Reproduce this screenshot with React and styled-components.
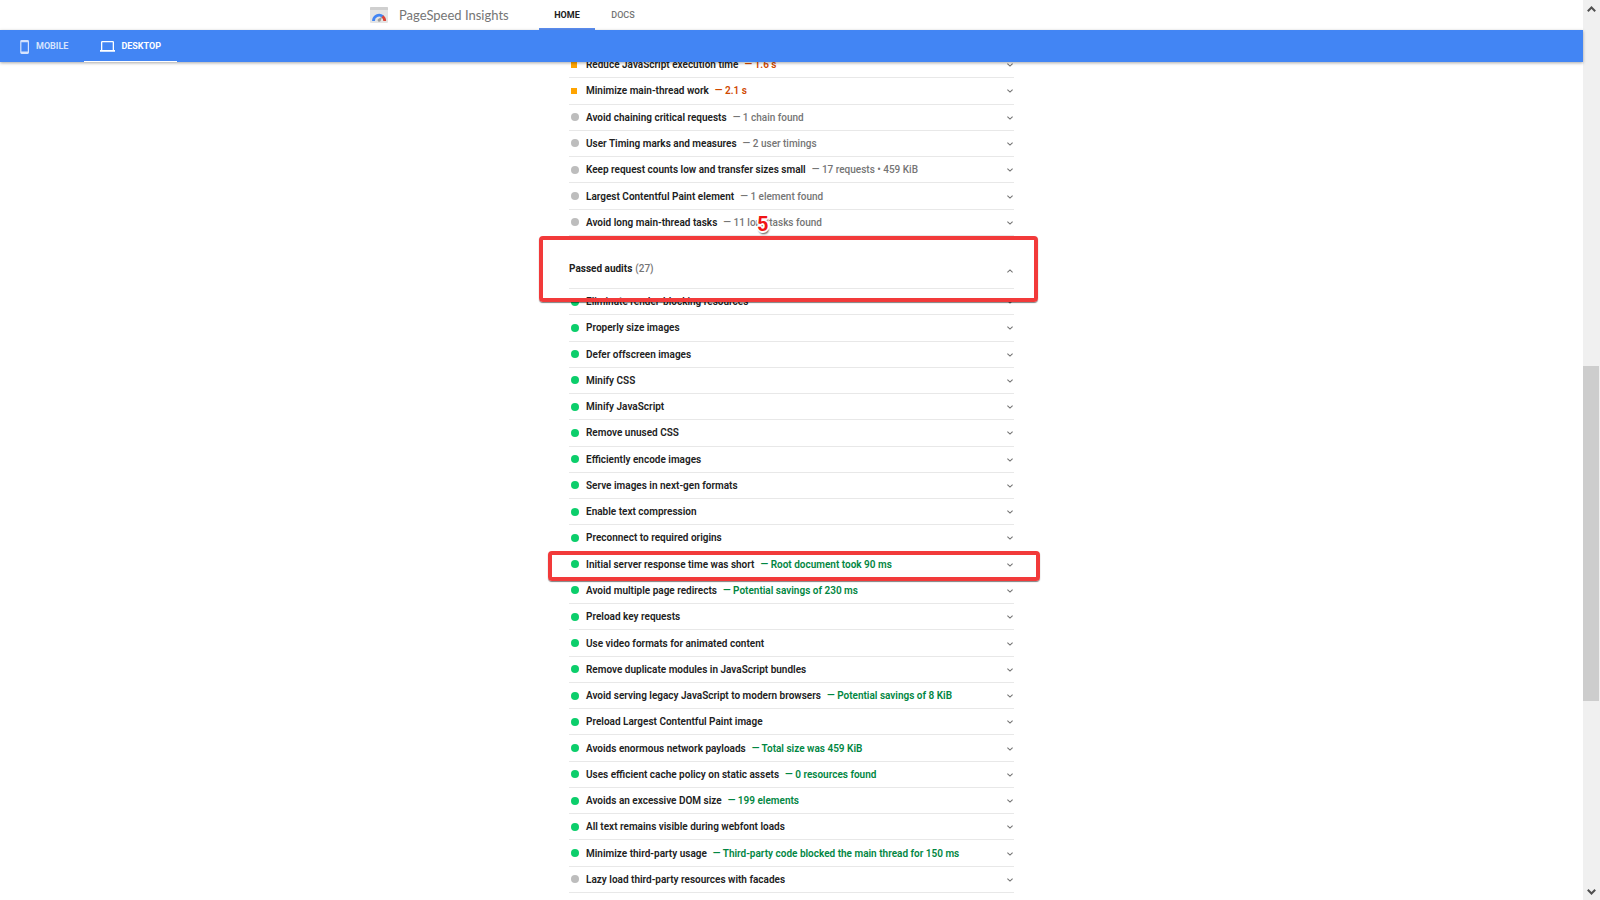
import React from "react";
import styled, { createGlobalStyle, css } from "styled-components";

const GlobalStyle = createGlobalStyle`
  * { box-sizing: border-box; }
  html, body, #root { height: 100%; }
  body {
    margin: 0;
    background: #fff;
    color: #212121;
    font-family: Roboto, "Liberation Sans", sans-serif;
    font-size: 10px;
    overflow: hidden;
  }
  button { font: inherit; color: inherit; background: none; border: 0; padding: 0; margin: 0; cursor: pointer; }
  h1, h2, ul { margin: 0; padding: 0; font: inherit; list-style: none; }
`;

const Shell = styled.div`
  display: grid;
  grid-template-columns: 1fr 17px;
  height: 100%;
`;

const Page = styled.div`
  display: flex;
  flex-direction: column;
  min-width: 0;
  min-height: 0;
`;

const TopBar = styled.header`
  display: flex;
  flex: none;
  height: 30px;
  background: #fff;
`;

const TopBarInner = styled.div`
  display: flex;
  align-items: stretch;
  width: 100%;
  max-width: 843px;
  margin: 0 auto;
`;

const Brand = styled.h1`
  display: flex;
  align-items: center;
  gap: 11px;
  width: 169px;
  color: #757575;
  font-family: Lato, Roboto, sans-serif;
  font-size: 13px;
  line-height: 14px;
  white-space: nowrap;
`;

const SiteNav = styled.nav`
  display: flex;
`;

const SiteLink = styled.a`
  display: flex;
  align-items: center;
  justify-content: center;
  width: 56px;
  padding-top: 1px;
  border-bottom: 2px solid ${(p) => (p.$active ? "#5a8df0" : "transparent")};
  color: ${(p) => (p.$active ? "#212121" : "#757575")};
  font-size: 9px;
  font-weight: ${(p) => (p.$active ? 700 : 500)};
  text-decoration: none;
`;

const DeviceBar = styled.div`
  position: relative;
  z-index: 2;
  display: flex;
  flex: none;
  height: 32px;
  padding-left: 4px;
  background: #4285f4;
  box-shadow: 0 1px 3px rgba(0, 0, 0, 0.35);
`;

const DeviceTab = styled.button`
  display: flex;
  align-items: center;
  gap: 6px;
  padding: 0 16px;
  border-bottom: 1px solid ${(p) => (p.$active ? "#fff" : "transparent")};
  color: ${(p) => (p.$active ? "#fff" : "#d5e3fd")};
  font-size: 9px;
  font-weight: 700;
  line-height: 10px;
  svg { margin-top: 2px; }
`;

const Viewport = styled.main`
  flex: 1;
  min-height: 0;
  overflow: hidden;
`;

const Report = styled.div`
  width: 100%;
  max-width: 445px;
  margin: -10px auto 0;
`;

const AuditList = styled.ul`
  display: grid;
  grid-auto-rows: 1fr;
  min-height: ${(p) => p.$minHeight}px;
`;

const AuditItem = styled.li`
  position: relative;
  display: flex;
  border-bottom: 1px solid #e8e8e8;
`;

const AuditButton = styled.button`
  display: flex;
  align-items: center;
  width: 100%;
  padding: 0 1px 0 2px;
  text-align: left;
  white-space: nowrap;
`;

const tones = {
  average: { mark: "#ffa400", text: "#d04900" },
  info: { mark: "#bdbdbd", text: "#757575" },
  pass: { mark: "#0cce6b", text: "#018642" },
};

const Marker = styled.span`
  flex: none;
  width: 8px;
  height: 8px;
  margin-right: 7px;
  border-radius: 50%;
  background: ${(p) => tones[p.$tone].mark};
  ${(p) =>
    p.$tone === "average" &&
    css`
      width: 6px;
      height: 6px;
      margin-right: 9px;
      border-radius: 0;
    `}
`;

const AuditTitle = styled.span`
  font-weight: 600;
`;

const AuditValue = styled.span`
  margin-left: 6px;
  color: ${(p) => tones[p.$tone].text};
  font-weight: ${(p) => (p.$tone === "info" ? 500 : 600)};
`;

const ChevronSlot = styled.span`
  display: flex;
  margin-left: auto;
  padding-top: 1px;
`;

const ClumpHeader = styled.h2`
  position: relative;
  display: flex;
  height: 53px;
  border-bottom: 1px solid #e8e8e8;
`;

const ClumpButton = styled.button`
  display: flex;
  align-items: center;
  gap: 3px;
  width: 100%;
  padding: 13px 1px 0 0;
  font-weight: 700;
  text-align: left;
  ${ChevronSlot} { padding-top: 5px; }
`;

const ClumpCount = styled.span`
  color: #757575;
  font-weight: 500;
`;

const Highlight = styled.span`
  position: absolute;
  z-index: 1;
  inset: ${(p) => p.$inset};
  border: 4px solid #f23a3a;
  border-radius: 4px;
  box-shadow: 0 1px 1px rgba(0, 0, 0, 0.5);
  pointer-events: none;
`;

const StepNumber = styled.span`
  position: absolute;
  left: 188px;
  top: 2px;
  color: #f01414;
  font-size: 20px;
  font-weight: 700;
  line-height: 24px;
  text-shadow: -2px 0 #fff, 2px 0 #fff, 0 -2px #fff, 0 2px #fff, 1px 1px #fff,
    -1px -1px #fff, 1px 3px 2px rgba(0, 0, 0, 0.7);
  pointer-events: none;
`;

const ScrollRail = styled.aside`
  display: flex;
  flex-direction: column;
  background: #f0f0f0;
`;

const ScrollButton = styled.button`
  display: flex;
  flex: none;
  align-items: center;
  justify-content: center;
  height: 17px;
`;

const ScrollTrack = styled.div`
  display: grid;
  flex: 1;
  grid-template-rows: 349fr 335fr 182fr;
`;

const ScrollThumb = styled.div`
  grid-row: 2;
  margin-right: 1px;
  background: #cdcdcd;
`;

function Chevron({ up }) {
  return (
    <svg width="6" height="4" viewBox="0 0 6 4" fill="none" stroke="#757575" strokeWidth="1.1" aria-hidden="true">
      <path d={up ? "M.4 3.4 3 .9l2.6 2.5" : "M.4.6 3 3.1 5.6.6"} />
    </svg>
  );
}

function ScrollArrow({ up }) {
  return (
    <svg width="9" height="6" viewBox="0 0 9 6" fill="none" stroke="#505050" strokeWidth="2" aria-hidden="true">
      <path d={up ? "M.8 5.2 4.5 1.5l3.7 3.7" : "M.8.8l3.7 3.7L8.2.8"} />
    </svg>
  );
}

function Logo() {
  return (
    <svg width="18" height="16" viewBox="0 0 18 16" aria-hidden="true">
      <rect width="18" height="16" rx="1" fill="#e4e4e4" />
      <path d="M0 1a1 1 0 0 1 1-1h16a1 1 0 0 1 1 1v2H0z" fill="#cfcfcf" />
      <path d="M3.5 14A5.6 5.6 0 0 1 12.8 9.6" fill="none" stroke="#4285f4" strokeWidth="2.8" />
      <path d="M12.4 9.3A5.6 5.6 0 0 1 14.7 14" fill="none" stroke="#db4437" strokeWidth="2.8" />
      <path d="M12.2 9.4 10.8 13.4a1.6 1.6 0 1 1-2.6-1.5z" fill="#9e9e9e" />
    </svg>
  );
}

function PhoneIcon() {
  return (
    <svg width="10" height="14" viewBox="0 0 10 14" aria-hidden="true">
      <path fillRule="evenodd" d="M1.6 0h6a1.4 1.4 0 0 1 1.4 1.4v11.2A1.4 1.4 0 0 1 7.6 14h-6a1.4 1.4 0 0 1-1.4-1.4V1.4A1.4 1.4 0 0 1 1.6 0zm-.2 2.2v9.2h6.4V2.2z" fill="currentColor" />
    </svg>
  );
}

function LaptopIcon() {
  return (
    <svg width="15" height="11" viewBox="0 0 15 11" aria-hidden="true">
      <path fillRule="evenodd" d="M2.2 0h10.6A1.2 1.2 0 0 1 14 1.2V9h1v1.8H0V9h1V1.2A1.2 1.2 0 0 1 2.2 0zm.1 1.3V9h10.4V1.3z" fill="currentColor" />
    </svg>
  );
}

const diagnostics = [
  { title: "Reduce JavaScript execution time", value: "1.6 s", tone: "average" },
  { title: "Minimize main-thread work", value: "2.1 s", tone: "average" },
  { title: "Avoid chaining critical requests", value: "1 chain found", tone: "info" },
  { title: "User Timing marks and measures", value: "2 user timings", tone: "info" },
  { title: "Keep request counts low and transfer sizes small", value: "17 requests • 459 KiB", tone: "info" },
  { title: "Largest Contentful Paint element", value: "1 element found", tone: "info" },
  { title: "Avoid long main-thread tasks", value: "11 long tasks found", tone: "info", step: 5 },
];

const passed = [
  { title: "Eliminate render-blocking resources" },
  { title: "Properly size images" },
  { title: "Defer offscreen images" },
  { title: "Minify CSS" },
  { title: "Minify JavaScript" },
  { title: "Remove unused CSS" },
  { title: "Efficiently encode images" },
  { title: "Serve images in next-gen formats" },
  { title: "Enable text compression" },
  { title: "Preconnect to required origins" },
  { title: "Initial server response time was short", value: "Root document took 90 ms", highlight: true },
  { title: "Avoid multiple page redirects", value: "Potential savings of 230 ms" },
  { title: "Preload key requests" },
  { title: "Use video formats for animated content" },
  { title: "Remove duplicate modules in JavaScript bundles" },
  { title: "Avoid serving legacy JavaScript to modern browsers", value: "Potential savings of 8 KiB" },
  { title: "Preload Largest Contentful Paint image" },
  { title: "Avoids enormous network payloads", value: "Total size was 459 KiB" },
  { title: "Uses efficient cache policy on static assets", value: "0 resources found" },
  { title: "Avoids an excessive DOM size", value: "199 elements" },
  { title: "All text remains visible during webfont loads" },
  { title: "Minimize third-party usage", value: "Third-party code blocked the main thread for 150 ms" },
  { title: "Lazy load third-party resources with facades", tone: "info" },
];

function Audit({ title, value, tone = "pass", step, highlight }) {
  return (
    <AuditItem>
      <AuditButton type="button" aria-expanded="false">
        <Marker $tone={tone} />
        <AuditTitle>{title}</AuditTitle>
        {value && <AuditValue $tone={tone}>— {value}</AuditValue>}
        <ChevronSlot>
          <Chevron />
        </ChevronSlot>
      </AuditButton>
      {step && <StepNumber>{step}</StepNumber>}
      {highlight && <Highlight $inset="-1px -26px -4px -21px" />}
    </AuditItem>
  );
}

export default function App() {
  return (
    <>
      <GlobalStyle />
      <Shell>
        <Page>
          <TopBar>
            <TopBarInner>
              <Brand>
                <Logo />
                PageSpeed Insights
              </Brand>
              <SiteNav>
                <SiteLink href="#home" $active>HOME</SiteLink>
                <SiteLink href="#docs">DOCS</SiteLink>
              </SiteNav>
            </TopBarInner>
          </TopBar>
          <DeviceBar>
            <DeviceTab type="button"><PhoneIcon />MOBILE</DeviceTab>
            <DeviceTab type="button" $active><LaptopIcon />DESKTOP</DeviceTab>
          </DeviceBar>
          <Viewport>
            <Report>
              <AuditList $minHeight={184}>
                {diagnostics.map((a) => <Audit key={a.title} {...a} />)}
              </AuditList>
              <ClumpHeader>
                <ClumpButton type="button" aria-expanded="true">
                  Passed audits <ClumpCount>(27)</ClumpCount>
                  <ChevronSlot><Chevron up /></ChevronSlot>
                </ClumpButton>
                <Highlight $inset="0 -24px -14px -30px" />
              </ClumpHeader>
              <AuditList $minHeight={604}>
                {passed.map((a) => <Audit key={a.title} {...a} />)}
              </AuditList>
            </Report>
          </Viewport>
        </Page>
        <ScrollRail>
          <ScrollButton type="button" aria-label="Scroll up"><ScrollArrow up /></ScrollButton>
          <ScrollTrack><ScrollThumb /></ScrollTrack>
          <ScrollButton type="button" aria-label="Scroll down"><ScrollArrow /></ScrollButton>
        </ScrollRail>
      </Shell>
    </>
  );
}
